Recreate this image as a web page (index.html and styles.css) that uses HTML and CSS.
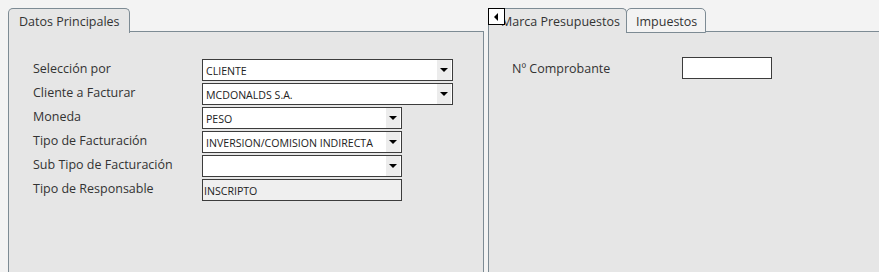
FILE: index.html
```html
<!DOCTYPE html>
<html lang="es">

<head>
    <meta charset="UTF-8">
    <title>Facturación</title>
    <link rel="stylesheet" href="styles.css">
</head>

<body>
    <div class="panes">
        <!-- panel izquierdo -->
        <div class="pane pane-left">
            <div class="tabs">
                <div class="tab active tab-datos">Datos Principales</div>
                <div class="tab-fill"></div>
            </div>
            <div class="pane-body">
                <div class="form-grid">
                    <label>Selección por</label>
                    <div class="combo wide"><span>CLIENTE</span><i class="arrow"></i></div>

                    <label>Cliente a Facturar</label>
                    <div class="combo wide"><span>MCDONALDS S.A.</span><i class="arrow"></i></div>

                    <label>Moneda</label>
                    <div class="combo"><span>PESO</span><i class="arrow"></i></div>

                    <label>Tipo de Facturación</label>
                    <div class="combo"><span>INVERSION/COMISION INDIRECTA</span><i class="arrow"></i></div>

                    <label>Sub Tipo de Facturación</label>
                    <div class="combo"><span></span><i class="arrow"></i></div>

                    <label>Tipo de Responsable</label>
                    <div class="field readonly">INSCRIPTO</div>
                </div>
            </div>
        </div>

        <!-- panel derecho -->
        <div class="pane pane-right">
            <div class="tabs">
                <div class="tab active tab-marca">Marca Presupuestos</div>
                <div class="tab tab-impuestos">Impuestos</div>
                <div class="tab-fill"></div>
                <button class="scroll-btn"><i class="arrow-left"></i></button>
            </div>
            <div class="pane-body">
                <div class="form-grid right-grid">
                    <label>Nº Comprobante</label>
                    <input type="text" class="field small">
                </div>
            </div>
        </div>
    </div>
</body>

</html>
```

FILE: styles.css
```css
html,
body {
    margin: 0;
    padding: 0;
    height: 100%;
}

body {
    background-color: #f3f3f3;
    font-family: "Open Sans", "Liberation Sans", sans-serif;
    font-size: 12.5px;
    color: #333;
    overflow: hidden;
}

.panes {
    display: flex;
    gap: 4px;
    padding: 8px 0 0 8px;
    height: 100%;
    box-sizing: border-box;
}

.pane {
    display: flex;
    flex-direction: column;
}

.pane-left {
    width: 476px;
}

.pane-right {
    flex: 1;
    position: relative;
}

/* pestañas */
.tabs {
    display: flex;
    height: 24px;
    position: relative;
}

.tab {
    box-sizing: border-box;
    height: 25px;
    border: 1px solid #7d8b94;
    border-radius: 5px 5px 0 0;
    padding: 4px 0 0 10px;
    background-color: #f3f3f3;
    white-space: nowrap;
    overflow: hidden;
    position: relative;
    z-index: 1;
}

.tab.active {
    background-color: #e6e6e6;
    border-bottom: none;
    z-index: 2;
}

.tab-datos {
    width: 122px;
}

.tab-marca {
    width: 139px;
    padding-left: 12px;
}

.tab-impuestos {
    width: 80px;
    margin-left: -1px;
    padding-left: 9px;
}

.tab-fill {
    flex: 1;
    border-bottom: 1px solid #7d8b94;
}

.scroll-btn {
    position: absolute;
    left: 0;
    top: 0;
    z-index: 3;
    width: 17px;
    height: 17px;
    padding: 0;
    margin: 0;
    border: 1px solid #000;
    background-color: #fff;
    display: flex;
    align-items: center;
    justify-content: center;
}

.arrow-left {
    width: 0;
    height: 0;
    border-top: 4px solid transparent;
    border-bottom: 4px solid transparent;
    border-right: 4px solid #000;
    margin-left: -2px;
}

.pane-body {
    flex: 1;
    background-color: #e6e6e6;
    border-left: 1px solid #7d8b94;
    border-right: 1px solid #7d8b94;
    padding: 27px 0 0 24px;
}

.pane-right .pane-body {
    border-right: none;
    padding: 25px 0 0 23px;
}

/* formulario */
.form-grid {
    display: grid;
    grid-template-columns: 169px auto;
    grid-auto-rows: 22px;
    row-gap: 2px;
    align-items: center;
    justify-items: start;
}

.right-grid {
    grid-template-columns: 170px auto;
}

.form-grid label {
    margin-top: -3px;
}

.right-grid label {
    margin-top: 0;
}

.combo,
.field {
    box-sizing: border-box;
    height: 22px;
    width: 200px;
    border: 1px solid #3c3c3c;
    background-color: #fff;
    font-size: 10.6px;
    color: #222;
    display: flex;
    align-items: center;
}

.combo.wide {
    width: 251px;
}

.combo span {
    flex: 1;
    padding: 1px 0 0 3px;
    white-space: nowrap;
    overflow: hidden;
}

.combo .arrow {
    width: 14px;
    height: 20px;
    background-color: #ececec;
    display: flex;
    align-items: center;
    justify-content: center;
    margin-right: 1px;
}

.combo .arrow::after {
    content: "";
    border-left: 4px solid transparent;
    border-right: 4px solid transparent;
    border-top: 4px solid #000;
}

.field.readonly {
    background-color: #efefef;
    padding: 1px 0 0 1px;
}

.field.small {
    width: 90px;
    margin: 0;
    font-family: inherit;
}
```
